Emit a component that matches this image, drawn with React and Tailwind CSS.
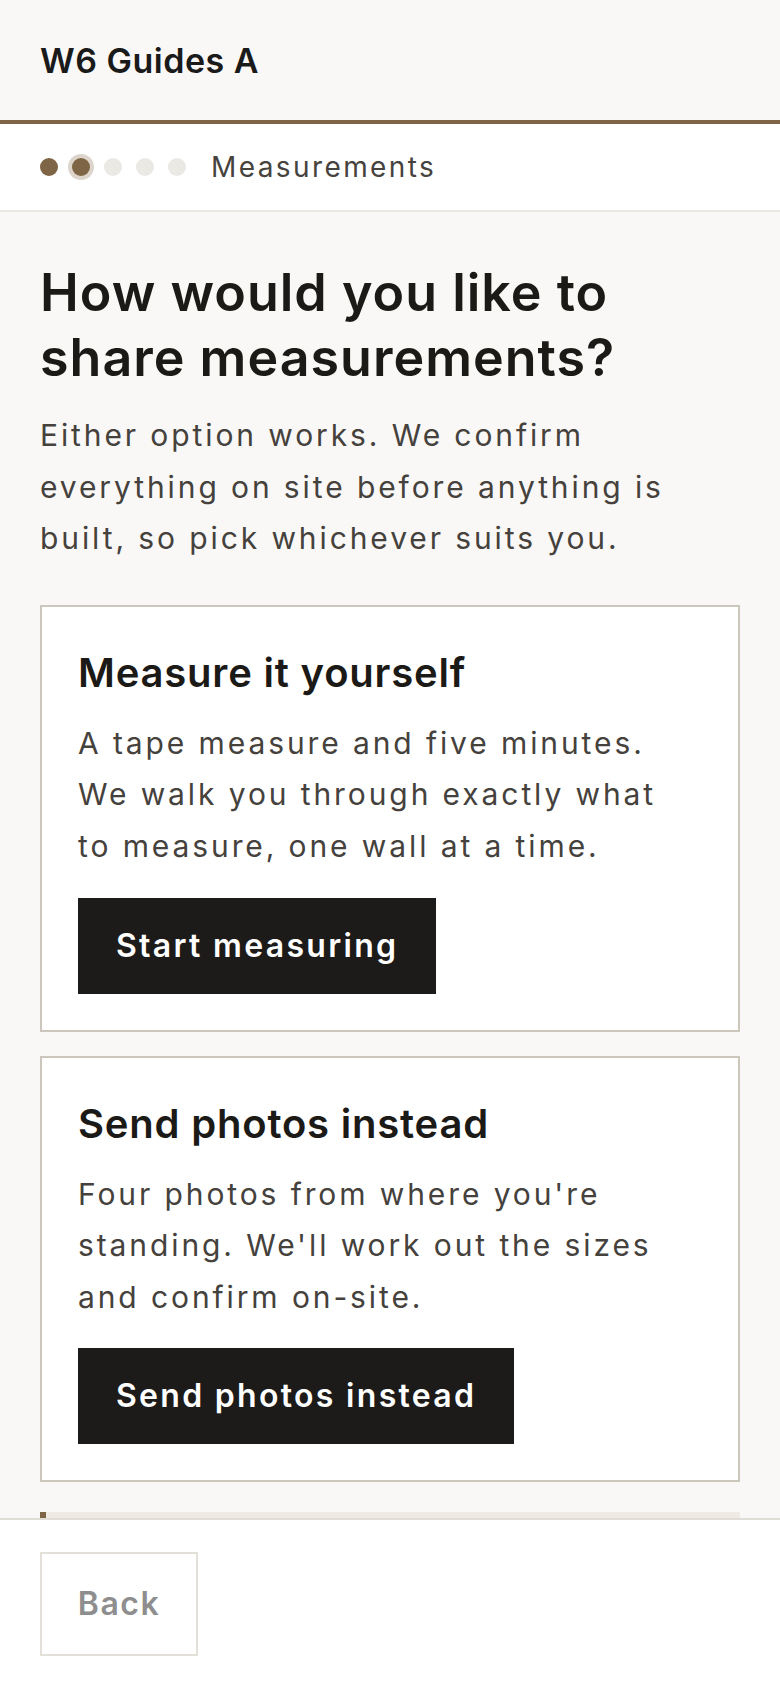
const F = { fontFamily: "Inter, 'Open Sans', sans-serif" };

function Dots() {
  return (
    <div className="flex items-center gap-[14px]">
      <span className="block w-[18px] h-[18px] rounded-full bg-[#7d6545]" />
      <span className="block w-[18px] h-[18px] rounded-full bg-[#7d6545] shadow-[0_0_0_4px_#ddd5cc]" />
      <span className="block w-[18px] h-[18px] rounded-full bg-[#ebe9e4]" />
      <span className="block w-[18px] h-[18px] rounded-full bg-[#ebe9e4]" />
      <span className="block w-[18px] h-[18px] rounded-full bg-[#ebe9e4]" />
    </div>
  );
}

function OptionCard({ title, body, cta }) {
  return (
    <div className="bg-white border-2 border-[#cbc7bd] pl-[36px] pr-[36px] pt-[38px] pb-[36px]">
      <h2 className="text-[40px] leading-[56px] font-semibold text-[#1c1a17] tracking-[0.8px]">{title}</h2>
      <p className="mt-[17px] max-w-[600px] text-[30px] leading-[51.6px] text-[#45413c] tracking-[2.9px]">{body}</p>
      <button className="mt-[25px] h-[96px] px-[38px] bg-[#1c1b19] text-white text-[32px] font-semibold tracking-[2.3px]">
        {cta}
      </button>
    </div>
  );
}

export default function App() {
  return (
    <div style={F} className="min-h-screen bg-[#f9f8f6] text-[#1c1a17]">
      <header className="h-[124px] bg-[#f9f8f6] border-b-4 border-[#7d6545] flex items-center px-[40px]">
        <div className="text-[34px] font-semibold text-[#1a1a1a] tracking-[0.5px]">W6 Guides A</div>
      </header>
      <div className="h-[88px] bg-white border-b-2 border-[#ebe8e2] flex items-center px-[40px] gap-[25px]">
        <Dots />
        <div className="text-[28px] text-[#46423d] tracking-[2.4px]">Measurements</div>
      </div>
      <main className="px-[40px] pt-[48px] pb-[240px]">
        <h1 className="text-[52px] leading-[65px] font-semibold text-[#1c1a17] tracking-[1px]">
          How would you like to share measurements?
        </h1>
        <p className="mt-[20px] text-[30px] leading-[51.6px] text-[#45413c] tracking-[2.9px]">
          Either option works. We confirm everything on site before anything is built, so pick whichever suits you.
        </p>
        <div className="mt-[40px] flex flex-col gap-[24px]">
          <OptionCard
            title="Measure it yourself"
            body="A tape measure and five minutes. We walk you through exactly what to measure, one wall at a time."
            cta="Start measuring"
          />
          <OptionCard
            title="Send photos instead"
            body="Four photos from where you're standing. We'll work out the sizes and confirm on-site."
            cta="Send photos instead"
          />
        </div>
        <div className="mt-[30px] h-[6px] bg-[#efebe4]">
          <div className="h-full w-[6px] bg-[#7d6545]" />
        </div>
      </main>
      <footer className="fixed bottom-0 left-0 right-0 bg-white border-t-2 border-[#e0ddd6] px-[40px] py-[32px]">
        <button className="w-[158px] h-[104px] border-2 border-[#e3e0da] bg-white text-[32px] font-semibold text-[#8e8e8e] tracking-[1.5px]">
          Back
        </button>
      </footer>
    </div>
  );
}
